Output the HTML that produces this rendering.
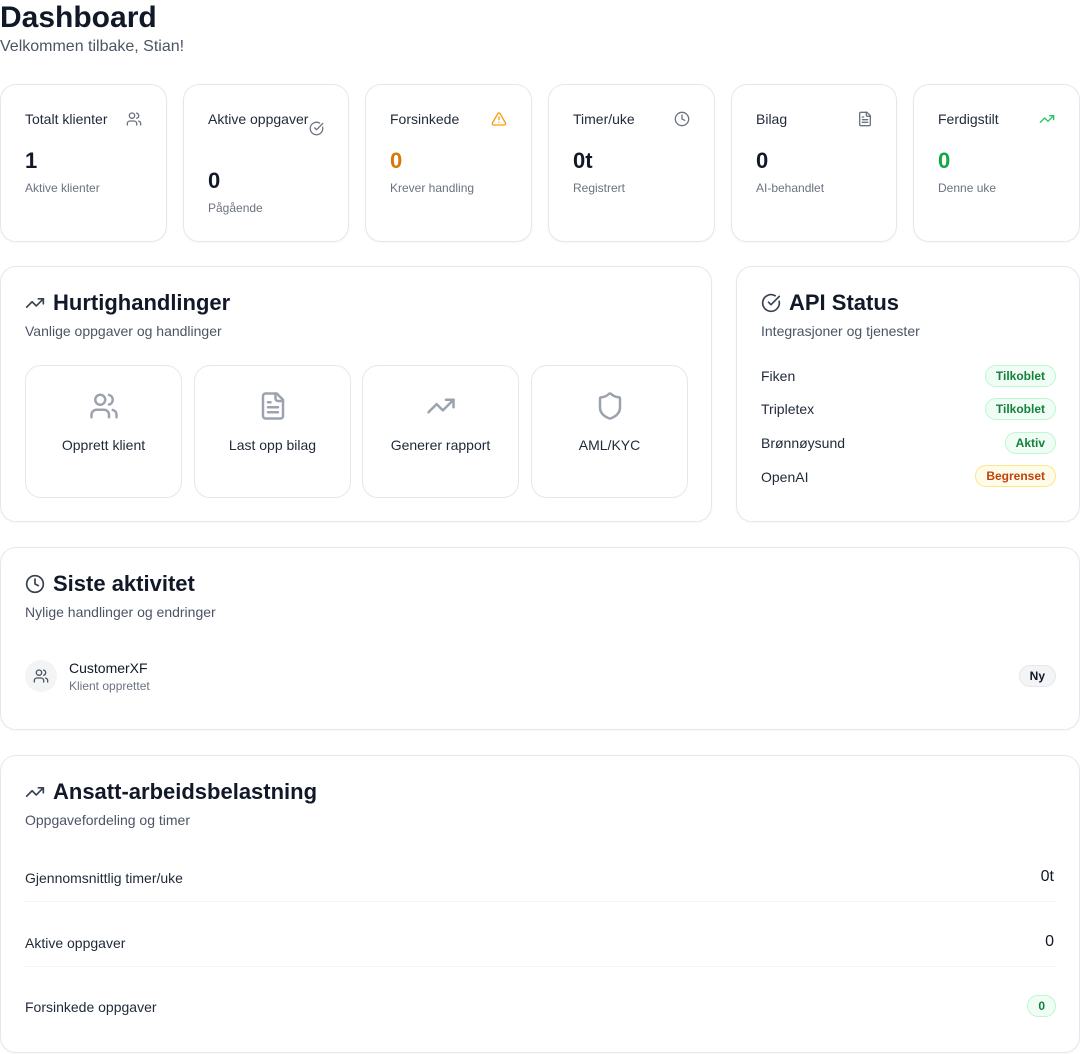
<!DOCTYPE html>
<html><head><meta charset="utf-8"><style>
*{box-sizing:border-box;margin:0;padding:0}
body{width:1080px;height:1054px;background:#fff;font-family:"Liberation Sans",Arial,sans-serif;color:#111827;position:relative;overflow:hidden}
.a{position:absolute}
.card{position:absolute;border-radius:16px;background:#fff;box-shadow:inset 0 0 0 1px #e5e7eb,0 1px 2px rgba(0,0,0,.04)}
.st{font-size:14px;color:#1f2937}
.big{font-size:22px;font-weight:bold}
.sub{font-size:12px;color:#6b7280}
.h2{font-size:22px;font-weight:bold;color:#111827}
.desc{font-size:14px;color:#4b5563}
.tile{position:absolute;border:1px solid #e5e7eb;border-radius:16px;top:99px;height:133px;width:157px;text-align:center}
.tile svg{position:absolute;left:63px;top:25px}
.tile div{position:absolute;top:71px;width:100%;font-size:14px;color:#1f2937}
.badge{position:absolute;right:24px;height:22px;border-radius:11px;font-size:12px;font-weight:bold;line-height:20px;padding:0 10px}
.g{background:#f0fdf4;border:1px solid #bbf7d0;color:#15803d}
.y{background:#fefce8;border:1px solid #fde68a;color:#c2410c}
.row{position:absolute;left:25px;font-size:14px;color:#1f2937}
svg{fill:none;stroke-linecap:round;stroke-linejoin:round}
</style></head><body>
<div class="a" style="left:0;top:0;font-size:30px;font-weight:bold;line-height:36px">Dashboard</div>
<div class="a" style="left:0;top:38px;font-size:16px;color:#4b5563">Velkommen tilbake, Stian!</div>

<div class="card" style="left:0;top:84px;width:167px;height:158px">
<div class="a st" style="left:25px;top:27px">Totalt klienter</div>
<svg class="a" style="left:126px;top:27px" width="16" height="16" viewBox="0 0 24 24" stroke="#6b7280" stroke-width="2"><path d="M16 21v-2a4 4 0 0 0-4-4H6a4 4 0 0 0-4 4v2"/><circle cx="9" cy="7" r="4"/><path d="M22 21v-2a4 4 0 0 0-3-3.87M16 3.13a4 4 0 0 1 0 7.75"/></svg>
<div class="a big" style="left:25px;top:64px">1</div>
<div class="a sub" style="left:25px;top:97px">Aktive klienter</div></div>

<div class="card" style="left:183px;top:84px;width:166px;height:158px">
<div class="a st" style="left:25px;top:27px">Aktive oppgaver</div>
<svg class="a" style="left:126px;top:37px" width="15" height="15" viewBox="0 0 24 24" stroke="#6b7280" stroke-width="2"><path d="M21.8 10A10 10 0 1 1 17 3.3"/><path d="m9 11 3 3L22 4"/></svg>
<div class="a big" style="left:25px;top:84px">0</div>
<div class="a sub" style="left:25px;top:117px">Pågående</div></div>

<div class="card" style="left:365px;top:84px;width:167px;height:158px">
<div class="a st" style="left:25px;top:27px">Forsinkede</div>
<svg class="a" style="left:126px;top:27px" width="16" height="16" viewBox="0 0 24 24" stroke="#f59e0b" stroke-width="2"><path d="m21.7 18-8-14a2 2 0 0 0-3.5 0l-8 14A2 2 0 0 0 4 21h16a2 2 0 0 0 1.7-3Z"/><path d="M12 9v4M12 17h.01"/></svg>
<div class="a big" style="left:25px;top:64px;color:#d97706">0</div>
<div class="a sub" style="left:25px;top:97px">Krever handling</div></div>

<div class="card" style="left:548px;top:84px;width:167px;height:158px">
<div class="a st" style="left:25px;top:27px">Timer/uke</div>
<svg class="a" style="left:126px;top:27px" width="16" height="16" viewBox="0 0 24 24" stroke="#6b7280" stroke-width="2"><circle cx="12" cy="12" r="10"/><path d="M12 6v6l4 2"/></svg>
<div class="a big" style="left:25px;top:64px">0t</div>
<div class="a sub" style="left:25px;top:97px">Registrert</div></div>

<div class="card" style="left:731px;top:84px;width:166px;height:158px">
<div class="a st" style="left:25px;top:27px">Bilag</div>
<svg class="a" style="left:126px;top:27px" width="16" height="16" viewBox="0 0 24 24" stroke="#6b7280" stroke-width="2"><path d="M15 2H6a2 2 0 0 0-2 2v16a2 2 0 0 0 2 2h12a2 2 0 0 0 2-2V7Z"/><path d="M14 2v4a2 2 0 0 0 2 2h4M10 9H8M16 13H8M16 17H8"/></svg>
<div class="a big" style="left:25px;top:64px">0</div>
<div class="a sub" style="left:25px;top:97px">AI-behandlet</div></div>

<div class="card" style="left:913px;top:84px;width:167px;height:158px">
<div class="a st" style="left:25px;top:27px">Ferdigstilt</div>
<svg class="a" style="left:126px;top:27px" width="16" height="16" viewBox="0 0 24 24" stroke="#22c55e" stroke-width="2"><path d="m22 7-8.5 8.5-5-5L2 17"/><path d="M16 7h6v6"/></svg>
<div class="a big" style="left:25px;top:64px;color:#16a34a">0</div>
<div class="a sub" style="left:25px;top:97px">Denne uke</div></div>

<div class="card" style="left:0;top:266px;width:712px;height:256px">
<svg class="a" style="left:25px;top:27px" width="20" height="20" viewBox="0 0 24 24" stroke="#374151" stroke-width="2"><path d="m22 7-8.5 8.5-5-5L2 17"/><path d="M16 7h6v6"/></svg>
<div class="a h2" style="left:53px;top:24px">Hurtighandlinger</div>
<div class="a desc" style="left:25px;top:57px">Vanlige oppgaver og handlinger</div>
<div class="tile" style="left:25px"><svg width="30" height="30" viewBox="0 0 24 24" stroke="#9ca3af" stroke-width="2"><path d="M16 21v-2a4 4 0 0 0-4-4H6a4 4 0 0 0-4 4v2"/><circle cx="9" cy="7" r="4"/><path d="M22 21v-2a4 4 0 0 0-3-3.87M16 3.13a4 4 0 0 1 0 7.75"/></svg><div>Opprett klient</div></div>
<div class="tile" style="left:194px"><svg width="30" height="30" viewBox="0 0 24 24" stroke="#9ca3af" stroke-width="2"><path d="M15 2H6a2 2 0 0 0-2 2v16a2 2 0 0 0 2 2h12a2 2 0 0 0 2-2V7Z"/><path d="M14 2v4a2 2 0 0 0 2 2h4M10 9H8M16 13H8M16 17H8"/></svg><div>Last opp bilag</div></div>
<div class="tile" style="left:362px"><svg width="30" height="30" viewBox="0 0 24 24" stroke="#9ca3af" stroke-width="2"><path d="m22 7-8.5 8.5-5-5L2 17"/><path d="M16 7h6v6"/></svg><div>Generer rapport</div></div>
<div class="tile" style="left:531px"><svg width="30" height="30" viewBox="0 0 24 24" stroke="#9ca3af" stroke-width="2"><path d="M20 13c0 5-3.5 7.5-7.7 9a1 1 0 0 1-.7 0C7.5 20.5 4 18 4 13V6a1 1 0 0 1 1-1c2 0 4.5-1.2 6.2-2.7a1.2 1.2 0 0 1 1.5 0C14.5 3.8 17 5 19 5a1 1 0 0 1 1 1Z"/></svg><div>AML/KYC</div></div>
</div>

<div class="card" style="left:736px;top:266px;width:344px;height:256px">
<svg class="a" style="left:25px;top:27px" width="20" height="20" viewBox="0 0 24 24" stroke="#374151" stroke-width="2"><path d="M21.8 10A10 10 0 1 1 17 3.3"/><path d="m9 11 3 3L22 4"/></svg>
<div class="a h2" style="left:53px;top:24px">API Status</div>
<div class="a desc" style="left:25px;top:57px">Integrasjoner og tjenester</div>
<div class="row" style="top:102px">Fiken</div><div class="badge g" style="top:99px">Tilkoblet</div>
<div class="row" style="top:135px">Tripletex</div><div class="badge g" style="top:132px">Tilkoblet</div>
<div class="row" style="top:169px">Brønnøysund</div><div class="badge g" style="top:166px">Aktiv</div>
<div class="row" style="top:203px">OpenAI</div><div class="badge y" style="top:199px">Begrenset</div>
</div>

<div class="card" style="left:0;top:547px;width:1080px;height:183px">
<svg class="a" style="left:25px;top:27px" width="20" height="20" viewBox="0 0 24 24" stroke="#374151" stroke-width="2"><circle cx="12" cy="12" r="10"/><path d="M12 6v6l4 2"/></svg>
<div class="a h2" style="left:53px;top:24px">Siste aktivitet</div>
<div class="a desc" style="left:25px;top:57px">Nylige handlinger og endringer</div>
<div class="a" style="left:25px;top:113px;width:32px;height:32px;border-radius:16px;background:#f3f4f6"><svg class="a" style="left:8px;top:8px" width="16" height="16" viewBox="0 0 24 24" stroke="#4b5563" stroke-width="2"><path d="M16 21v-2a4 4 0 0 0-4-4H6a4 4 0 0 0-4 4v2"/><circle cx="9" cy="7" r="4"/><path d="M22 21v-2a4 4 0 0 0-3-3.87M16 3.13a4 4 0 0 1 0 7.75"/></svg></div>
<div class="a" style="left:69px;top:113px;font-size:14px">CustomerXF</div>
<div class="a sub" style="left:69px;top:132px">Klient opprettet</div>
<div class="badge" style="top:118px;background:#f3f4f6;border:1px solid #e5e7eb;color:#111827">Ny</div>
</div>

<div class="card" style="left:0;top:755px;width:1080px;height:298px">
<svg class="a" style="left:25px;top:27px" width="20" height="20" viewBox="0 0 24 24" stroke="#374151" stroke-width="2"><path d="m22 7-8.5 8.5-5-5L2 17"/><path d="M16 7h6v6"/></svg>
<div class="a h2" style="left:53px;top:24px">Ansatt-arbeidsbelastning</div>
<div class="a desc" style="left:25px;top:57px">Oppgavefordeling og timer</div>
<div class="row" style="top:115px">Gjennomsnittlig timer/uke</div><div class="a" style="right:26px;top:113px;font-size:16px">0t</div>
<div class="a" style="left:25px;right:25px;top:146px;border-top:1px solid #f3f4f6"></div>
<div class="row" style="top:180px">Aktive oppgaver</div><div class="a" style="right:26px;top:178px;font-size:16px">0</div>
<div class="a" style="left:25px;right:25px;top:211px;border-top:1px solid #f3f4f6"></div>
<div class="row" style="top:244px">Forsinkede oppgaver</div><div class="badge g" style="top:240px">0</div>
</div>
</body></html>
